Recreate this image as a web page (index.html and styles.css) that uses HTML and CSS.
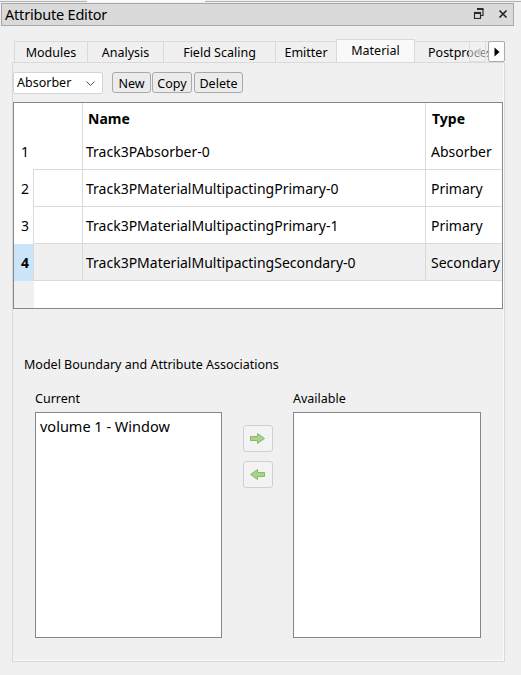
FILE: index.html
```html
<!DOCTYPE html>
<html lang="en">
<head>
<meta charset="utf-8">
<title>Attribute Editor</title>
<link rel="stylesheet" href="styles.css">
</head>
<body>
<div class="topedge"><span class="seg seg-a"></span><span class="seg seg-gap"></span><span class="seg seg-b"></span></div>

<header class="titlebar">
  <span class="title">Attribute Editor</span>
  <span class="tb-icons">
    <svg class="ico-float" width="11" height="11" viewBox="0 0 11 11">
      <path d="M4 1.5h6v6h-2" fill="none" stroke="#2b2b2b" stroke-width="1.2"/>
      <path d="M4 1h6.5" stroke="#2b2b2b" stroke-width="2"/>
      <rect x="1.5" y="4.5" width="6" height="6" fill="none" stroke="#2b2b2b" stroke-width="1.2"/>
      <path d="M1 5h7" stroke="#2b2b2b" stroke-width="2"/>
    </svg>
    <svg class="ico-close" width="10" height="10" viewBox="0 0 10 10">
      <path d="M1.5 1.5l7 7M8.5 1.5l-7 7" stroke="#222" stroke-width="1.6"/>
    </svg>
  </span>
</header>

<section class="tabs-area">
  <div class="tabbar">
    <div class="tabstrip">
      <div class="tab t-modules">Modules</div>
      <div class="tab t-analysis">Analysis</div>
      <div class="tab t-field">Field Scaling</div>
      <div class="tab t-emitter">Emitter</div>
      <div class="tab t-material selected">Material</div>
      <div class="tab t-post">Postprocess</div>
    </div>
    <button class="scroll-btn scroll-left" aria-label="Scroll tabs left">
      <svg width="6" height="10" viewBox="0 0 6 10"><path d="M5.5 0.5v9L0.5 5z" fill="#c9c9c9"/></svg>
    </button>
    <button class="scroll-btn scroll-right" aria-label="Scroll tabs right">
      <svg width="6" height="10" viewBox="0 0 6 10"><path d="M0.5 0.5v9L5.5 5z" fill="#000"/></svg>
    </button>
  </div>

  <div class="pane">
    <div class="toolbar">
      <div class="combo">
        <span>Absorber</span>
        <svg class="chev" width="9" height="5" viewBox="0 0 9 5"><path d="M0.5 0.5l4 4 4-4" fill="none" stroke="#555" stroke-width="1"/></svg>
      </div>
      <div class="btn-group">
        <button class="btn b-new">New</button>
        <button class="btn b-copy">Copy</button>
        <button class="btn b-delete">Delete</button>
      </div>
    </div>

    <div class="grid">
      <div class="row head">
        <div class="cell vh"></div>
        <div class="cell c-flag"></div>
        <div class="cell c-name">Name</div>
        <div class="cell c-type">Type</div>
      </div>
      <div class="row first">
        <div class="cell vh">1</div>
        <div class="cell c-flag"></div>
        <div class="cell c-name">Track3PAbsorber-0</div>
        <div class="cell c-type">Absorber</div>
      </div>
      <div class="row">
        <div class="cell vh">2</div>
        <div class="cell c-flag"></div>
        <div class="cell c-name">Track3PMaterialMultipactingPrimary-0</div>
        <div class="cell c-type">Primary</div>
      </div>
      <div class="row">
        <div class="cell vh">3</div>
        <div class="cell c-flag"></div>
        <div class="cell c-name">Track3PMaterialMultipactingPrimary-1</div>
        <div class="cell c-type">Primary</div>
      </div>
      <div class="row current">
        <div class="cell vh">4</div>
        <div class="cell c-flag"></div>
        <div class="cell c-name">Track3PMaterialMultipactingSecondary-0</div>
        <div class="cell c-type">Secondary</div>
      </div>
      <div class="row filler">
        <div class="cell vh"></div>
        <div class="cell blank"></div>
      </div>
    </div>

    <div class="assoc">
      <div class="assoc-title">Model Boundary and Attribute Associations</div>
      <div class="assoc-body">
        <div class="list-col">
          <div class="list-label">Current</div>
          <div class="listbox"><div class="item">volume 1 - Window</div></div>
        </div>
        <div class="movers">
          <button class="move-btn" aria-label="Move to available">
            <svg width="28" height="25" viewBox="0 0 28 25"><path d="M6.5 10.5h7v-3l7 5-7 5v-3h-7z" fill="#a7d38b" stroke="#88b86c" stroke-width="1" stroke-linejoin="round"/></svg>
          </button>
          <button class="move-btn" aria-label="Move to current">
            <svg width="28" height="25" viewBox="0 0 28 25"><path d="M20.5 10.5h-7v-3l-7 5 7 5v-3h7z" fill="#a7d38b" stroke="#88b86c" stroke-width="1" stroke-linejoin="round"/></svg>
          </button>
        </div>
        <div class="list-col">
          <div class="list-label">Available</div>
          <div class="listbox wide"></div>
        </div>
      </div>
    </div>
  </div>
</section>
</body>
</html>
```

FILE: styles.css
```css
* { box-sizing: border-box; }

html, body { margin: 0; padding: 0; }

body {
  width: 521px;
  height: 675px;
  overflow: hidden;
  background: #f0f0f0;
  color: #000;
  font-family: "Noto Sans", "Open Sans", sans-serif;
}

/* thin splitter edge above the dock */
.topedge { display: flex; height: 3px; }
.seg { height: 2px; border-bottom: 1px solid #b3b3b3; }
.seg-a { width: 87px; }
.seg-gap { width: 118px; background: #fbfbfb; border-bottom-color: #fbfbfb; }
.seg-b { flex: 1; }

/* dock title bar */
.titlebar {
  margin-left: 1px;
  width: 513px;
  height: 23px;
  background: #dadada;
  border: 1px solid #a8a8a8;
  display: flex;
  align-items: center;
  justify-content: space-between;
  padding: 0 5px 1px 3px;
}
.title { font-size: 14.5px; line-height: 1; letter-spacing: -0.2px; }
.tb-icons { display: flex; align-items: center; gap: 14px; }
.ico-float { margin-top: -1px; }

/* tab widget */
.tabs-area { position: relative; margin-top: 13px; padding-left: 12px; }

.tabbar { position: relative; height: 23px; width: 493px; }
.tabstrip {
  display: flex;
  align-items: flex-end;
  height: 23px;
  width: 491px;
  margin-left: 2px;
  overflow: hidden;
}
.tab {
  flex: none;
  height: 21px;
  margin-left: -1px;
  border: 1px solid #d9d9d9;
  border-bottom: none;
  background: #f0f0f0;
  font-size: 12.5px;
  display: flex;
  align-items: center;
  justify-content: center;
  padding-top: 1px;
  white-space: nowrap;
}
.tab:first-child { margin-left: 0; }
.t-modules { width: 74px; }
.t-analysis { width: 77px; }
.t-field { width: 113px; }
.t-emitter { width: 62px; }
.t-material { width: 79px; }
.t-post { width: 100px; justify-content: flex-start; padding-left: 13px; }
.tab.selected {
  height: 24px;
  margin-bottom: -1px;
  background: #f9f9f9;
  padding-top: 0;
  padding-bottom: 2px;
  position: relative;
  z-index: 1;
}

/* scroll arrows float over the clipped end of the tab strip */
.scroll-btn {
  position: absolute;
  top: 2px;
  width: 17px;
  height: 21px;
  padding: 0;
  display: flex;
  align-items: center;
  justify-content: center;
  border-radius: 2px;
}
.scroll-left {
  right: 19px;
  background: rgba(242, 242, 242, 0.55);
  border: 1px solid #dedede;
}
.scroll-right {
  right: 0;
  background: #fdfdfd;
  border: 1px solid #ababab;
}

.pane {
  width: 493px;
  border: 1px solid #d9d9d9;
  box-shadow: inset -1px -1px 0 #fbfbfb;
  background: #f0f0f0;
  padding: 9px 1px 23px 0;
}

/* toolbar above the table */
.toolbar { display: flex; align-items: flex-start; height: 22px; }
.combo {
  width: 90px;
  height: 22px;
  background: #fff;
  border: 1px solid #d4d4d4;
  border-radius: 2px;
  display: flex;
  align-items: center;
  justify-content: space-between;
  padding: 0 7px 1px 3px;
  font-size: 12.5px;
}
.chev { margin-top: 1px; }
.btn-group { display: flex; gap: 1px; margin-left: 9px; }
.btn {
  height: 21px;
  padding: 1px 0 0;
  font-family: inherit;
  font-size: 12.5px;
  color: #000;
  background: #ececec;
  border: 1px solid #a9a9a9;
  border-radius: 3px;
  display: flex;
  align-items: center;
  justify-content: center;
}
.b-new { width: 39px; }
.b-copy { width: 40px; }
.b-delete { width: 49px; margin-left: 1px; }

/* table view */
.grid {
  margin-top: 8px;
  width: 490px;
  border: 1px solid #848890;
  background: #fff;
}
.row {
  display: grid;
  grid-template-columns: 19px 49px 343px 77px;
  height: 37px;
}
.row.head { height: 30px; }
.cell {
  display: flex;
  align-items: center;
  font-size: 14px;
  white-space: nowrap;
  overflow: hidden;
  border-bottom: 1px solid #dadada;
}
.cell.vh { border-bottom: none; padding-left: 7px; }
.c-flag, .c-name, .c-type { border-left: 1px solid #dadada; }
.c-name { padding-left: 3px; }
.c-type { padding-left: 5px; }
.row.head .cell { border-bottom: none; font-weight: 700; }
.row.head .c-name { padding-left: 5px; }
.row.head .c-type { padding-left: 6px; }
.row.head .c-flag, .row.first .c-flag { border-left: none; }

.row.current .cell { background: #f0f0f0; }
.row.current .cell.vh { background: #cce4f7; font-weight: 700; }

.row.filler { height: 27px; grid-template-columns: 19px 1fr; }
.row.filler .cell { border: none; }
.row.filler .cell.vh { background: #f0f0f0; }
.row.filler .blank { border-left: 1px solid #f0f0f0; }

/* boundary association section */
.assoc { padding-top: 48px; }
.assoc-title { font-size: 12.5px; line-height: 16px; padding-left: 11px; }
.assoc-body { display: flex; align-items: flex-start; padding: 18px 0 0 22px; }
.list-col { display: flex; flex-direction: column; }
.list-label { font-size: 12.5px; line-height: 16px; margin-bottom: 5px; }
.listbox {
  width: 187px;
  height: 226px;
  background: #fff;
  border: 1px solid #82868e;
  padding: 3px 4px;
}
.listbox.wide { width: 188px; }
.item { font-size: 14.5px; line-height: 20px; }

.movers {
  display: flex;
  flex-direction: column;
  gap: 9px;
  margin: 34px 20px 0 21px;
}
.move-btn {
  width: 30px;
  height: 27px;
  padding: 0;
  background: #f3f3f3;
  border: 1px solid #d0d0d0;
  border-radius: 3px;
  display: flex;
  align-items: center;
  justify-content: center;
}
```
